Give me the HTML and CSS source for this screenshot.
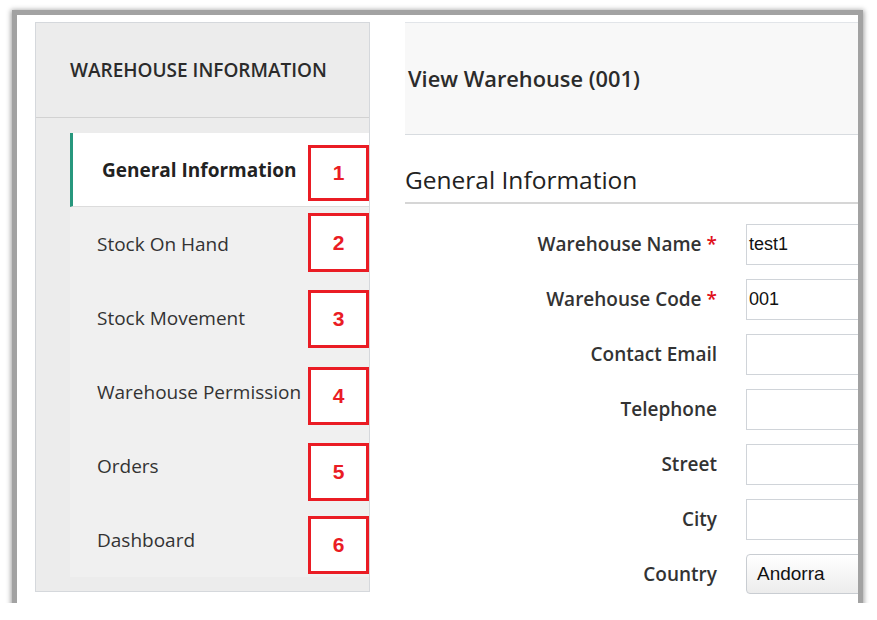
FILE: index.html
```html
<!DOCTYPE html>
<html lang="en">
<head>
<meta charset="utf-8">
<title>View Warehouse</title>
<link rel="stylesheet" href="styles.css">
</head>
<body>
<div class="frame">
  <aside class="side">
    <div class="side-head">WAREHOUSE INFORMATION</div>
    <div class="side-body">
      <nav class="menu">
        <div class="item active">General Information<span class="mark m1">1</span></div>
        <div class="item">Stock On Hand<span class="mark m2">2</span></div>
        <div class="item">Stock Movement<span class="mark m3">3</span></div>
        <div class="item">Warehouse Permission<span class="mark m4">4</span></div>
        <div class="item">Orders<span class="mark m5">5</span></div>
        <div class="item">Dashboard<span class="mark m6">6</span></div>
      </nav>
    </div>
  </aside>
  <main class="main">
    <div class="main-head">View Warehouse (001)</div>
    <h2 class="section">General Information</h2>
    <div class="form">
      <label class="lbl">Warehouse Name<span class="req">*</span></label>
      <div class="input">test1</div>
      <label class="lbl">Warehouse Code<span class="req">*</span></label>
      <div class="input">001</div>
      <label class="lbl">Contact Email</label>
      <div class="input"></div>
      <label class="lbl">Telephone</label>
      <div class="input"></div>
      <label class="lbl">Street</label>
      <div class="input"></div>
      <label class="lbl">City</label>
      <div class="input"></div>
      <label class="lbl">Country</label>
      <div class="select">Andorra</div>
    </div>
  </main>
</div>
</body>
</html>
```

FILE: styles.css
```css
* { box-sizing: border-box; }
html, body { margin: 0; padding: 0; background: #fff; }
body { font-family: "Open Sans", "Liberation Sans", sans-serif; color: #333; }

.frame {
  margin: 15px 0 0 17px;
  width: 841px;
  height: 588px;
  overflow: hidden;
  background: #fff;
  display: flex;
  gap: 35px;
  padding: 7px 0 0 18px;
  box-shadow: 0 0 0 5px #a2a2a2, 0 1px 5px 6px rgba(0,0,0,0.38);
}

.side {
  width: 335px;
  height: 570px;
  flex-shrink: 0;
  border: 1px solid #d5d8dc;
  background: #ececec;
  display: flex;
  flex-direction: column;
}
.side-head {
  height: 95px;
  border-bottom: 1px solid #d2d2d2;
  display: flex;
  align-items: center;
  padding-left: 34px;
  font-size: 19px;
  font-weight: 600;
  color: #2b2b2b;
}
.side-body {
  flex: 1;
  padding: 15px 0 0 34px;
}
.menu {
  background: #f0f0f0;
  display: flex;
  flex-direction: column;
}
.item {
  position: relative;
  height: 74px;
  display: flex;
  align-items: center;
  padding-left: 27px;
  font-size: 19px;
  color: #333;
}
.item.active {
  background: #fff;
  border-left: 3px solid #27977d;
  border-bottom: 1px solid #dcdcdc;
  padding-left: 29px;
  font-weight: 700;
  color: #222;
}
.mark {
  position: absolute;
  right: 0;
  width: 61px;
  height: 58px;
  border: 3px solid #ea1c24;
  background: #fff;
  color: #ea1c24;
  font-family: "Liberation Sans", Arial, sans-serif;
  font-weight: 700;
  font-size: 21px;
  display: flex;
  align-items: center;
  justify-content: center;
}
.m1 { top: 12px; height: 56px; }
.m2 { top: 6px; height: 59px; }
.m3 { top: 9px; }
.m4 { top: 12px; }
.m5 { top: 14px; }
.m6 { top: 13px; }

.main {
  width: 560px;
  flex-shrink: 0;
}
.main-head {
  height: 113px;
  background: #f8f8f8;
  border-top: 1px solid #e2e5e9;
  border-bottom: 1px solid #d8dce0;
  display: flex;
  align-items: center;
  padding-left: 3px;
  font-size: 21.8px;
  font-weight: 600;
  color: #2b2b2b;
}
.section {
  margin: 0;
  padding: 30px 0 7px 0;
  line-height: 30px;
  font-size: 24.5px;
  font-weight: 400;
  color: #222;
  border-bottom: 2px solid #d6d6d6;
}
.form {
  display: grid;
  grid-template-columns: 312px 1fr;
  column-gap: 29px;
  row-gap: 14px;
  grid-auto-rows: 41px;
  padding-top: 20px;
}
.lbl {
  display: flex;
  align-items: center;
  justify-content: flex-end;
  font-size: 19px;
  font-weight: 600;
  color: #333;
  padding-bottom: 2px;
}
.req { color: #e0101a; margin-left: 5px; }
.input {
  border: 1px solid #d0d4d9;
  background: #fff;
  display: flex;
  align-items: center;
  padding-left: 2px;
  font-family: "Liberation Sans", Arial, sans-serif;
  font-size: 18px;
  color: #111;
}
.select {
  height: 40px;
  border: 1px solid #c9cdd2;
  border-radius: 4px;
  background: linear-gradient(#ffffff, #ececec);
  display: flex;
  align-items: center;
  padding-left: 10px;
  font-family: "Liberation Sans", Arial, sans-serif;
  font-size: 19px;
  color: #111;
}
```
